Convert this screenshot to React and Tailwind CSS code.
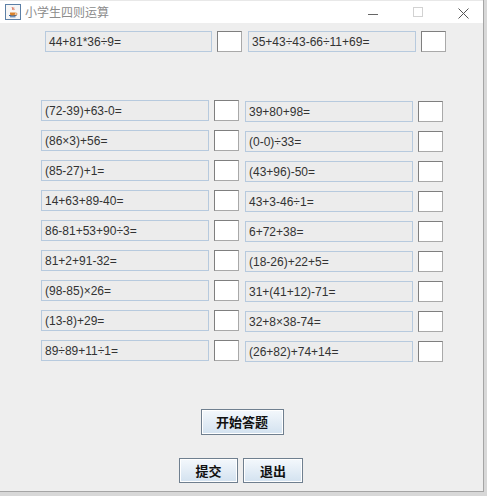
import React from "react";

const left = ["(72-39)+63-0=", "(86×3)+56=", "(85-27)+1=", "14+63+89-40=", "86-81+53+90÷3=", "81+2+91-32=", "(98-85)×26=", "(13-8)+29=", "89÷89+11÷1="];
const right = ["39+80+98=", "(0-0)÷33=", "(43+96)-50=", "43+3-46÷1=", "6+72+38=", "(18-26)+22+5=", "31+(41+12)-71=", "32+8×38-74=", "(26+82)+74+14="];

const font = { fontFamily: '"Liberation Sans", Arial, sans-serif' };

function Field({ text, w = "w-[168px]" }) {
  return (
    <div className={`${w} h-[21px] border border-[#b7cade] bg-[#ececec] flex items-center pl-[3px] text-[12px] text-[#333333] leading-none`} style={font}>
      {text}
    </div>
  );
}

function Box() {
  return <div className="w-[25px] h-[21px] bg-white border border-[#a9a9a9] border-t-[#7f7f7f] border-l-[#7f7f7f]" />;
}

function Btn({ children, w }) {
  return (
    <div className={`${w} flex items-center justify-center border border-[#6f7f8f] bg-gradient-to-b from-[#f4f8fc] to-[#d3e2f0] text-[13px] font-bold text-[#111] shadow-[inset_0_0_0_1px_#ffffff]`} style={{ fontFamily: '"Noto Sans CJK SC", sans-serif' }}>
      {children}
    </div>
  );
}

export default function App() {
  return (
    <div className="w-[487px] h-[496px] bg-[#d8d8d8] overflow-hidden">
      <div className="w-[484px] h-[492px] flex flex-col bg-[#eeeeee] border-r border-b border-[#a5a5a5]">
        <div className="h-[23px] bg-white flex items-center shrink-0 border-t border-[#e8e8e8]">
          <svg width="16" height="16" viewBox="0 0 16 16" className="ml-[5px]">
            <rect x="0.5" y="0.5" width="15" height="15" fill="#f6f6f6" stroke="#5b7fa6" />
            <path d="M4 11.5h7.5M5 12.8h5.5" stroke="#3366a0" strokeWidth="1" />
            <path d="M5 8.5h5v1.8a1.5 1.5 0 0 1-1.5 1.2h-2A1.5 1.5 0 0 1 5 10.3z" fill="#d9822b" />
            <path d="M10 9h1a1 1 0 0 1 0 2h-1" fill="none" stroke="#d9822b" strokeWidth="0.8" />
            <path d="M7.5 3c-1 1 1 2 0 3M8.8 3.5c-0.8 0.8 0.8 1.6 0 2.6" stroke="#d04a2a" strokeWidth="0.8" fill="none" />
          </svg>
          <span className="ml-[4px] text-[12px] text-[#8c8c8c]" style={{ fontFamily: '"Noto Sans CJK SC", sans-serif' }}>小学生四则运算</span>
          <div className="flex-1" />
          <div className="w-[10px] h-px bg-[#666] mr-[35px] mt-[4px]" />
          <div className="w-[10px] h-[10px] border border-[#d2d2d2] mr-[35px]" />
          <svg width="11" height="11" viewBox="0 0 11 11" className="mr-[14px] mt-[2px]">
            <path d="M0.5 0.5L10.5 10.5M10.5 0.5L0.5 10.5" stroke="#555" strokeWidth="1" />
          </svg>
        </div>
        <div className="flex flex-col">
          <div className="flex pl-[45px] mt-[8px]">
            <Field text="44+81*36÷9=" w="w-[167px]" />
            <div className="ml-[5px]"><Box /></div>
            <div className="ml-[6px]"><Field text="35+43÷43-66÷11+69=" /></div>
            <div className="ml-[5px]"><Box /></div>
          </div>
          <div className="flex flex-col gap-[9px] mt-[48px]">
            {left.map((l, i) => (
              <div key={i} className="flex items-start h-[21px] pl-[41px]">
                <Field text={l} />
                <div className="ml-[5px]"><Box /></div>
                <div className="ml-[6px] mt-px"><Field text={right[i]} /></div>
                <div className="ml-[5px] mt-px"><Box /></div>
              </div>
            ))}
          </div>
          <div className="flex justify-center mt-[48px] pl-[1px]">
            <Btn w="w-[83px] h-[26px]">开始答题</Btn>
          </div>
          <div className="flex justify-center gap-[5px] mt-[23px] pr-[1px]">
            <Btn w="w-[59px] h-[25px]">提交</Btn>
            <Btn w="w-[60px] h-[25px]">退出</Btn>
          </div>
        </div>
      </div>
    </div>
  );
}
